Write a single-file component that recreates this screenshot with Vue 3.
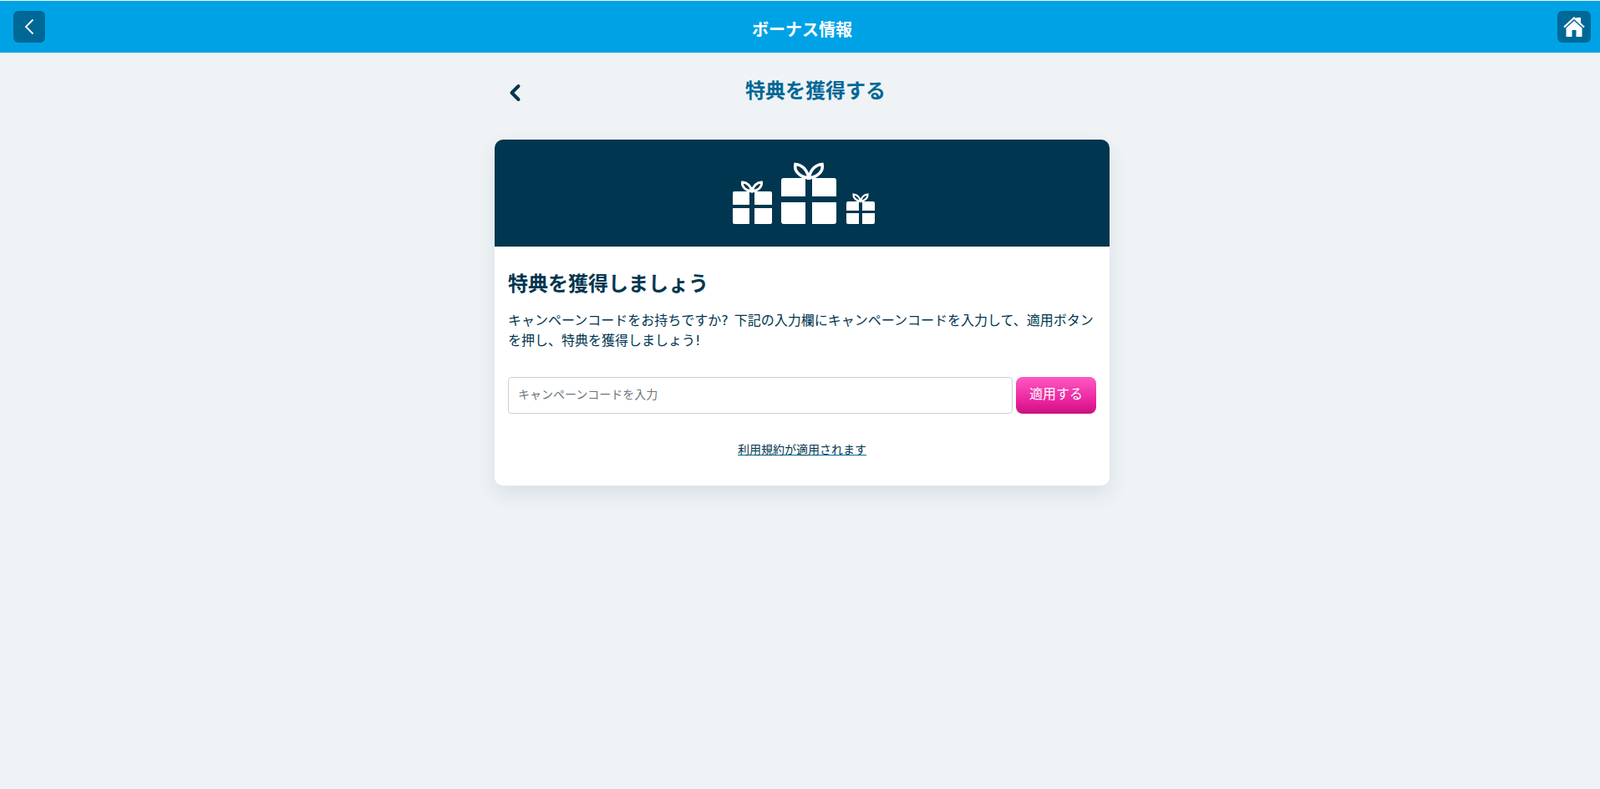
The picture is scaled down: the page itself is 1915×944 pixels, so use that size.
<script setup>
</script>

<template>
  <div class="page">
    <header class="topbar">
      <button class="nav-btn back" aria-label="戻る">
        <svg width="14" height="20" viewBox="0 0 14 20"><path d="M11.500 1.500 3 10l8.500 8.500" fill="none" stroke="#fff" stroke-width="1.800"/></svg>
      </button>
      <h1 class="bar-title">ボーナス情報</h1>
      <button class="nav-btn home" aria-label="ホーム">
        <svg width="26" height="26" viewBox="0 0 26 26">
          <path d="M15.500 2h5.500v7l-5.500-5z" fill="#fff"/>
          <path d="M1 13.500 13 2.500l12 11" fill="none" stroke="#fff" stroke-width="2.200"/>
          <path fill-rule="evenodd" d="M13 6 22.500 14.500V25H15.500V17H10.500V25H3.500V14.500z" fill="#fff"/>
        </svg>
      </button>
    </header>

    <main class="main">
      <div class="content">
        <div class="subhead">
          <svg class="sub-back" width="16" height="22" viewBox="0 0 16 22"><path d="M12.500 3 4.500 11l8 8" fill="none" stroke="#00364f" stroke-width="4" stroke-linecap="round" stroke-linejoin="round"/></svg>
          <h2 class="sub-title">特典を獲得する</h2>
        </div>

        <section class="card">
          <div class="banner">
            <svg width="180" height="80" viewBox="870 190 180 80" fill="#fff">
              <path d="M877 231a2 2 0 0 1 2-2h18v16h-20zM903 229h19a2 2 0 0 1 2 2v14h-21zM877 249h20v19h-18a2 2 0 0 1-2-2zM903 249h21v17a2 2 0 0 1-2 2h-19z"/>
              <path d="M900 229c-1.500-6-5-10.500-11.500-11-1 5.500 4 10 11.500 11zM900 229c1.500-6 5-10.500 11.500-11 1 5.500-4 10-11.500 11z" fill="none" stroke="#fff" stroke-width="2.800"/>

              <path d="M935 216a3 3 0 0 1 3-3h26v22h-29zM972 213h26a3 3 0 0 1 3 3v19h-29zM935 242h29v26h-26a3 3 0 0 1-3-3zM972 242h29v23a3 3 0 0 1-3 3h-26z"/>
              <path d="M968 213c-2-9-6-15.500-16-16.500-2 8 5 15 16 16.500zM968 213c2-9 6-15.500 16-16.500 2 8-5 15-16 16.500z" fill="none" stroke="#fff" stroke-width="3.600"/>

              <path d="M1013 243a2 2 0 0 1 2-2h13v11h-15zM1032 241h13a2 2 0 0 1 2 2v9h-15zM1013 255h15v13h-13a2 2 0 0 1-2-2zM1032 255h15v11a2 2 0 0 1-2 2h-13z"/>
              <path d="M1030 241c-1-4.500-3.500-8-8.500-8.500-.5 4 3 7.500 8.500 8.500zM1030 241c1-4.500 3.500-8 8.500-8.500.5 4-3 7.500-8.500 8.500z" fill="none" stroke="#fff" stroke-width="2.200"/>
            </svg>
          </div>
          <div class="body">
            <h3 class="heading">特典を獲得しましょう</h3>
            <p class="desc">キャンペーンコードをお持ちですか? 下記の入力欄にキャンペーンコードを入力して、適用ボタンを押し、特典を獲得しましょう!</p>
            <form class="code-form" @submit.prevent>
              <input class="code-input" type="text" placeholder="キャンペーンコードを入力" />
              <button class="apply" type="submit">適用する</button>
            </form>
            <p class="terms"><a href="#" @click.prevent>利用規約が適用されます</a></p>
          </div>
        </section>
      </div>
    </main>
  </div>
</template>

<style>
html, body { margin: 0; background: #eff3f6; }
</style>

<style scoped>
.page {
  min-height: 944px;
  background: #eff3f6;
  font-family: "Noto Sans CJK JP", "Noto Sans", sans-serif;
  color: #00364f;
  padding-top: 1px;
  box-sizing: border-box;
}
.topbar {
  height: 62px;
  background: #00a2e6;
  display: flex;
  align-items: center;
  padding: 0 11px 0 16px;
}
.nav-btn {
  flex: none;
  height: 38px;
  border: 0;
  border-radius: 6px;
  background: #006896;
  padding: 0;
  display: flex;
  align-items: center;
  justify-content: center;
}
.back { width: 38px; }
.home { width: 40px; }
.bar-title {
  flex: 1;
  margin: 0;
  padding-left: 2px;
  text-align: center;
  font-size: 20px;
  font-weight: 700;
  color: #fff;
  line-height: 30px;
  position: relative;
  top: 3px;
}
.main { padding-left: 5px; }
.content {
  width: 736px;
  margin: 0 auto;
}
.subhead {
  display: flex;
  align-items: flex-start;
  height: 104px;
}
.sub-back { margin: 37px 0 0 16px; flex: none; }
.sub-title {
  flex: 1;
  margin: 28px 0 0;
  text-align: center;
  font-size: 24px;
  font-weight: 700;
  color: #006896;
  line-height: 32px;
}
.card {
  background: #fff;
  border-radius: 10px;
  overflow: hidden;
  box-shadow: 0 10px 24px rgba(0, 54, 79, 0.1);
}
.banner {
  height: 128px;
  background: #00364f;
  display: flex;
  justify-content: center;
  padding-top: 23px;
  box-sizing: border-box;
}
.banner svg { display: block; }
.body { padding: 25px 16px 34px; }
.heading {
  margin: 0;
  font-size: 24px;
  font-weight: 700;
  line-height: 36px;
}
.desc {
  margin: 16px 0 0;
  font-family: "DejaVu Sans", "Noto Sans CJK JP", sans-serif;
  font-size: 16px;
  line-height: 24px;
  word-spacing: 2px;
}
.code-form {
  display: flex;
  gap: 4px;
  margin-top: 31px;
}
.code-input {
  flex: 1;
  min-width: 0;
  height: 44px;
  box-sizing: border-box;
  border: 1px solid #ccd0d4;
  border-radius: 4px;
  padding: 0 11px 4px;
  font: 14px "Noto Sans CJK JP", sans-serif;
  color: #00364f;
  background: #fff;
  outline: none;
}
.code-input::placeholder { color: #6c757d; opacity: 1; }
.apply {
  width: 96px;
  height: 44px;
  border: 0;
  border-radius: 8px;
  background: linear-gradient(#ff59c2, #e8209a 70%, #c9117f);
  color: #fff;
  font: 16px "Noto Sans CJK JP", sans-serif;
  padding: 0 0 6px;
}
.terms {
  margin: 32px 0 0;
  text-align: center;
  font-size: 14px;
  line-height: 20px;
}
.terms a { color: #00364f; text-decoration: underline; text-decoration-color: #006f9f; }
</style>
